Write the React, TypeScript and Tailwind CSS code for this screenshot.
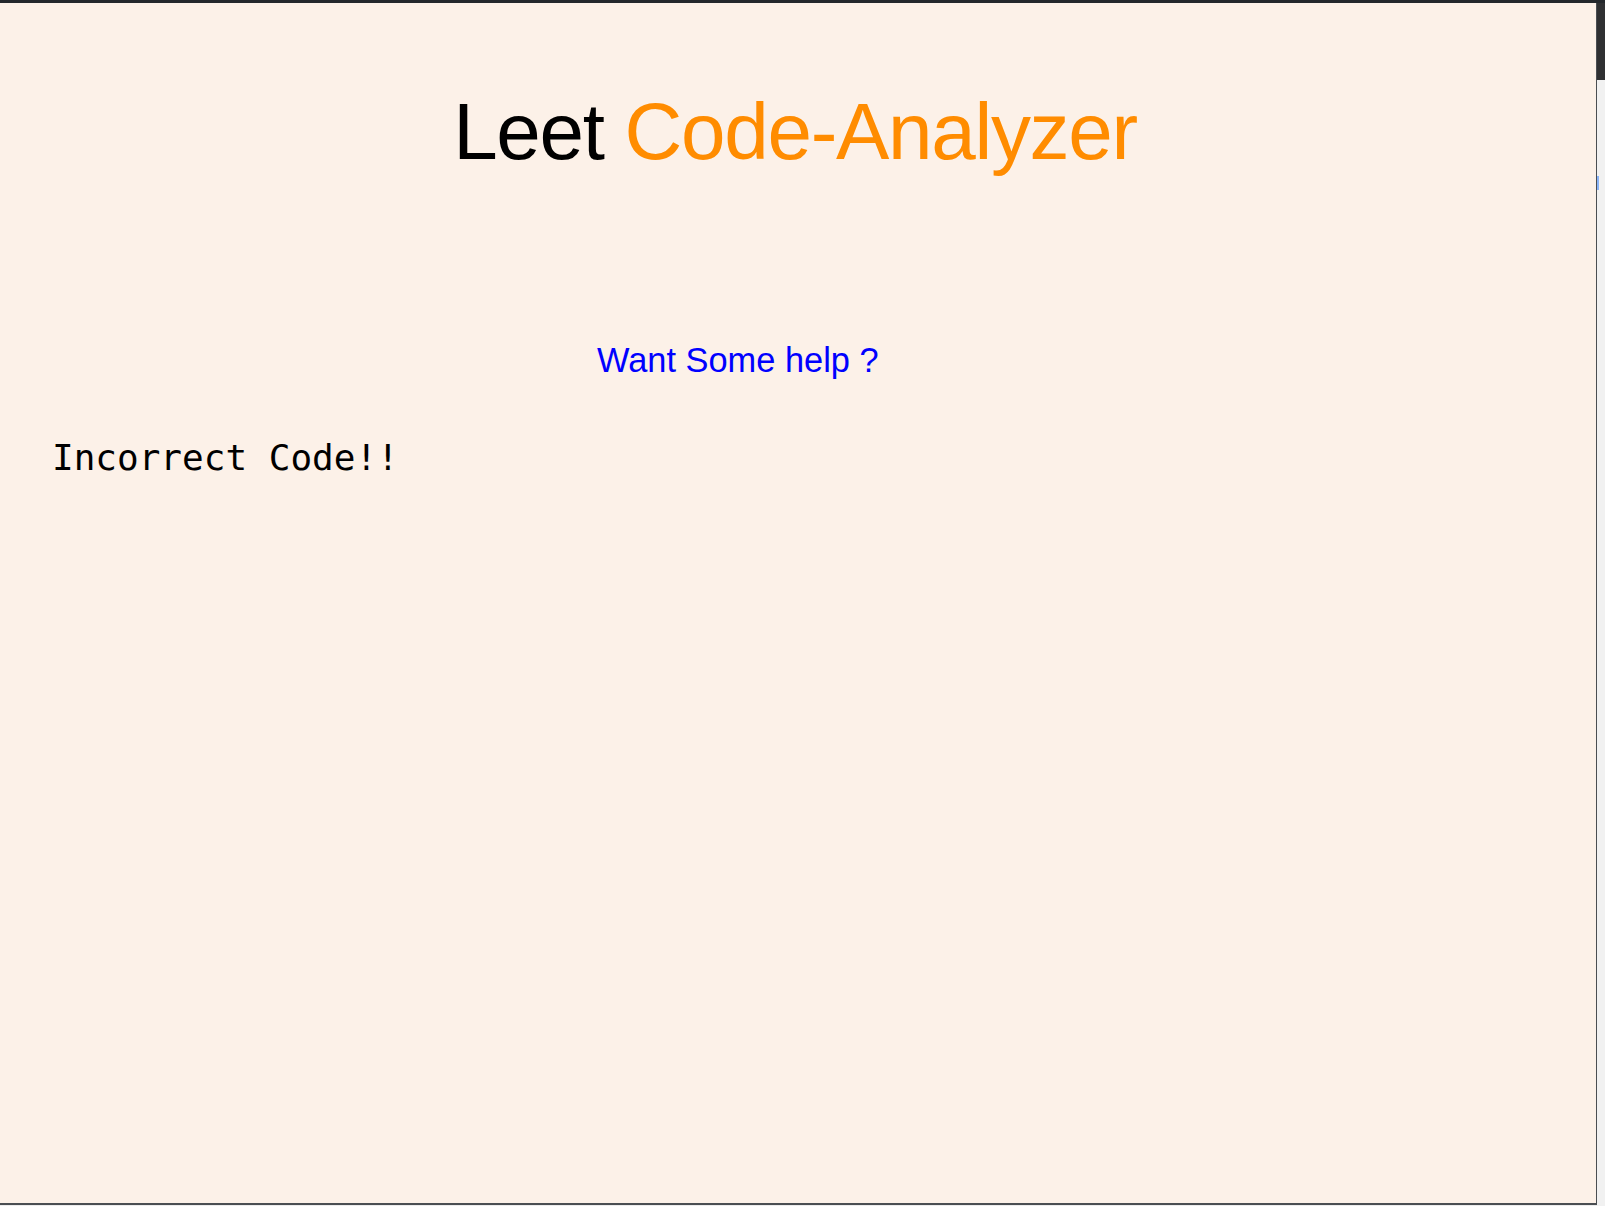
import React from 'react';

const App: React.FC = () => {
  return (
    <div className="w-[1605px] h-[1206px] flex flex-col bg-[#ececec] overflow-hidden">
      <div className="h-[3px] bg-[#23272b] shrink-0" />
      <div className="flex flex-1">
        <div className="flex flex-col">
          <main className="w-[1597px] h-[1202px] bg-[#fcf1e8] border-r border-b-2 border-[#4a4e52] flex flex-col">
            <h1
              className="mt-[89px] pr-[6px] text-center text-[80px] leading-none tracking-[-1.3px] text-black"
              style={{ fontFamily: '"Liberation Sans", Arial, sans-serif' }}
            >
              Leet <span className="text-[#ff8c00]">Code-Analyzer</span>
            </h1>
            <div
              className="mt-[171px] pl-[597px] text-[34.4px] leading-none text-[#0000ff]"
              style={{ fontFamily: '"Liberation Sans", Arial, sans-serif' }}
            >
              Want Some help ?
            </div>
            <pre
              className="mt-[63px] pl-[52px] text-[36px] leading-none text-black"
              style={{ fontFamily: '"DejaVu Sans Mono", monospace' }}
            >
              Incorrect Code!!
            </pre>
          </main>
        </div>
        <div className="flex-1 flex flex-col">
          <div className="h-[77px] bg-[#2f3032]" />
          <div className="flex-1 bg-[#f1f1f1] pt-[96px]">
            <div className="w-[2px] h-[14px] bg-[#8ab4f8]" />
          </div>
        </div>
      </div>
    </div>
  );
};

export default App;
